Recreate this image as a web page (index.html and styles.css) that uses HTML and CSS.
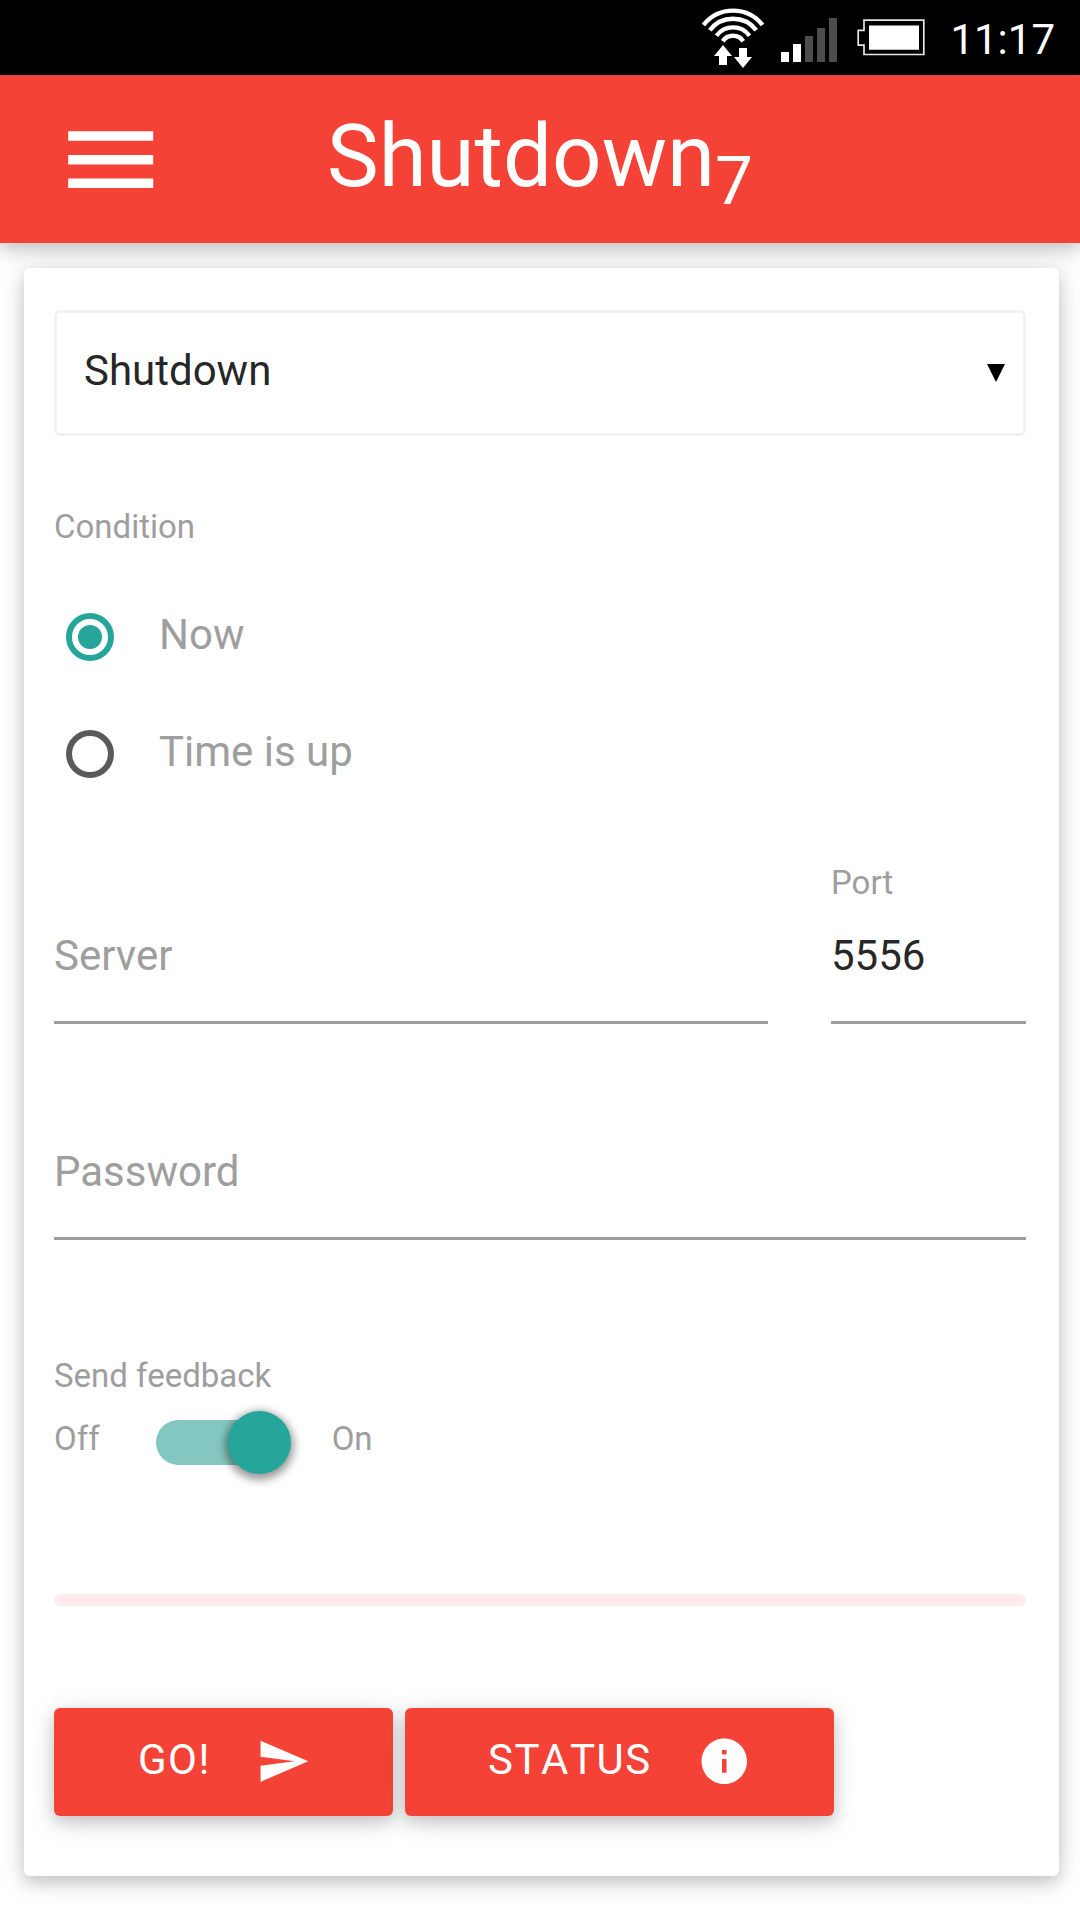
FILE: index.html
```html
<!DOCTYPE html>
<html lang="en">
  <head>
    <meta charset="utf-8" />
    <title>Shutdown7</title>
    <link rel="stylesheet" href="styles.css">
  </head>

  <body>
    <!-- Phone status bar -->
    <div class="status-bar">
      <svg class="wifi" width="64" height="75" viewBox="0 0 64 75">
        <g fill="none" stroke="#fff" stroke-width="4.4">
          <path d="M2.5 25A37.5 37.5 0 0 1 61.5 25" />
          <path d="M8.8 30.3A29 29 0 0 1 55.2 30.3" />
          <path d="M15.5 35.7A20.5 20.5 0 0 1 48.5 35.7" />
          <path d="M21.8 41.2A12.3 12.3 0 0 1 42.2 41.2" />
        </g>
        <path fill="#fff" d="M22 45l9 11h-5v9h-8v-9h-5zM38 48h8v9h5l-9 11-9-11h5z" />
      </svg>
      <svg class="signal" width="56" height="75" viewBox="0 0 56 75">
        <path fill="#fff" d="M0 52h8v10H0zM12 44h8v18h-8z" />
        <path fill="#4d4d4d" d="M24 36h8v26h-8zM36 28h8v34h-8zM48 18h8v44h-8z" />
      </svg>
      <svg class="battery" width="68" height="75" viewBox="0 0 68 75">
        <path fill="none" stroke="#e6e6e6" stroke-width="1.7" d="M7 20.2h59.8v34.3H7v-9.3H1.2V30.3H7z" />
        <path fill="#fff" d="M12 25.4h50v24.4H12z" />
      </svg>
      <span class="clock">11:17</span>
    </div>

    <nav class="nav">
      <svg class="menu-icon" viewBox="0 0 24 24">
        <path fill="#fff" d="M3 18h18v-2H3v2zm0-5h18v-2H3v2zm0-7v2h18V6H3z" />
      </svg>
      <h1 class="logo">Shutdown<sub>7</sub></h1>
    </nav>

    <form class="card">
      <div class="select">
        <span>Shutdown</span>
        <svg class="caret" viewBox="0 0 18 18"><path d="M0 0h18L9 18z" /></svg>
      </div>

      <div class="label condition">Condition</div>
      <label class="radio checked"><i class="dot"></i><span>Now</span></label>
      <label class="radio"><i class="dot"></i><span>Time is up</span></label>

      <div class="row">
        <div class="field server">
          <input type="text" placeholder="Server">
        </div>
        <div class="field port">
          <div class="label">Port</div>
          <input type="text" value="5556">
        </div>
      </div>

      <div class="field password">
        <input type="password" placeholder="Password">
      </div>

      <div class="label feedback">Send feedback</div>
      <div class="switch">
        <span>Off</span>
        <div class="lever"><div class="thumb"></div></div>
        <span>On</span>
      </div>

      <div class="progress"></div>

      <div class="buttons">
        <button type="button" class="btn">
          <span>GO!</span>
          <svg viewBox="0 0 24 24"><path d="M2.01 21L23 12 2.01 3 2 10l15 2-15 2z" /></svg>
        </button>
        <button type="button" class="btn status">
          <span>STATUS</span>
          <svg viewBox="0 0 24 24"><path d="M12 2C6.480 2 2 6.480 2 12s4.480 10 10 10 10-4.480 10-10S17.520 2 12 2zm1 15h-2v-6h2v6zm0-8h-2V7h2v2z" /></svg>
        </button>
      </div>
    </form>
  </body>
</html>
```
FILE: styles.css
```css
* {
  box-sizing: border-box;
}

body {
  margin: 0;
  height: 1920px;
  overflow: hidden;
  background-color: #fff;
  color: rgba(0, 0, 0, 0.87);
  font-family: Roboto, sans-serif;
  font-size: 42px;
}

/* Status bar */
.status-bar {
  display: flex;
  justify-content: flex-end;
  height: 75px;
  padding-right: 25px;
  background-color: #000;
  color: #fff;
}

.signal {
  margin-left: 16px;
}

.battery {
  margin-left: 20px;
}

.clock {
  width: 130px;
  line-height: 80px;
  text-align: right;
}

/* Navigation */
.nav {
  display: grid;
  grid-template-columns: 114px 1fr 114px;
  align-items: center;
  height: 168px;
  padding: 0 54px;
  background-color: #f44336;
  box-shadow: 0 6px 15px rgba(0, 0, 0, 0.16), 0 6px 30px rgba(0, 0, 0, 0.12);
}

.menu-icon {
  width: 113.4px;
  height: 113.4px;
  margin-top: 1px;
}

.logo {
  margin: 0;
  color: #fff;
  font-size: 87px;
  font-weight: 400;
  line-height: 163px;
  height: 168px;
  text-align: center;
}

.logo sub {
  position: relative;
  bottom: -18px;
  font-size: 67.5px;
  line-height: 0;
  vertical-align: baseline;
}

/* Card */
.card {
  width: 1035px;
  height: 1608px;
  margin: 25px 0 0 24px;
  padding: 42px 33px 0 30px;
  border-radius: 6px;
  background-color: #fff;
  box-shadow: 0 6px 15px rgba(0, 0, 0, 0.16), 0 6px 30px rgba(0, 0, 0, 0.12);
}

.select {
  display: flex;
  justify-content: space-between;
  height: 126px;
  padding: 0 18px 0 27px;
  border: 3px solid #f2f2f2;
  border-radius: 6px;
  line-height: 115px;
}

.caret {
  width: 18px;
  height: 18px;
  margin-top: 51px;
}

.label {
  color: #9e9e9e;
  font-size: 33px;
  line-height: 50px;
}

.condition {
  margin: 66px 0 26px;
}

.radio {
  display: flex;
  height: 117px;
  color: #9e9e9e;
  line-height: 113px;
}

.dot {
  width: 48px;
  height: 48px;
  margin: 35px 45px 0 12px;
  padding: 6px;
  border: 6px solid #5a5a5a;
  border-radius: 50%;
}

.checked .dot {
  border-color: #26a69a;
  background-color: #26a69a;
  background-clip: content-box;
}

.row {
  display: flex;
  justify-content: space-between;
  align-items: flex-end;
  margin-top: 46px;
}

.field input {
  display: block;
  width: 100%;
  height: 116px;
  padding: 0 0 18px;
  border: none;
  border-bottom: 3px solid #9e9e9e;
  background: transparent;
  color: inherit;
  font: inherit;
}

.field input::placeholder {
  color: #9e9e9e;
}

.server {
  width: 714px;
}

.port {
  width: 195px;
}

.password {
  margin-top: 100px;
}

/* Switch */
.feedback {
  margin-top: 111px;
}

.switch {
  display: flex;
  align-items: center;
  height: 75px;
  color: #9e9e9e;
  font-size: 33px;
}

.lever {
  position: relative;
  width: 120px;
  height: 45px;
  margin: 8px 56px 0;
  border-radius: 45px;
  background-color: #84c7c1;
}

.thumb {
  position: absolute;
  top: -9px;
  right: -15px;
  width: 63px;
  height: 63px;
  border-radius: 63px;
  background-color: #26a69a;
  box-shadow: 0 3px 9px 3px rgba(0, 0, 0, 0.4);
}

.progress {
  height: 12px;
  margin-top: 118px;
  border-radius: 6px;
  background-color: #ffebee;
}

/* Buttons */
.buttons {
  display: flex;
  gap: 12px;
  margin-top: 102px;
}

.btn {
  display: flex;
  justify-content: space-between;
  width: 339px;
  height: 108px;
  padding: 0 82px 0 84px;
  border: none;
  border-radius: 6px;
  background-color: #f44336;
  box-shadow: 0 6px 15px rgba(0, 0, 0, 0.16), 0 6px 30px rgba(0, 0, 0, 0.12);
  color: #fff;
  font: inherit;
  font-kerning: none;
  letter-spacing: 1.5px;
  line-height: 103px;
}

.btn svg {
  width: 54.6px;
  height: 54.6px;
  margin-top: 26px;
  fill: #fff;
}

.status {
  width: 429px;
  padding-left: 83px;
}
```
